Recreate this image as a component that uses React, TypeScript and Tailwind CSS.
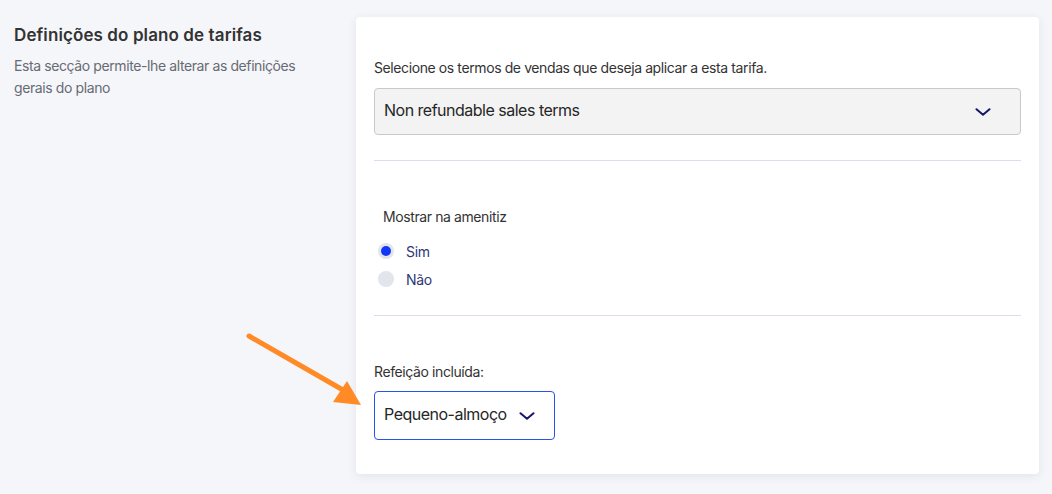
import React from 'react'

const font = { fontFamily: 'Inter, "Noto Sans", sans-serif' }

function Chevron({ className = '' }: { className?: string }) {
  return (
    <svg viewBox="0 0 16 8" className={className} fill="none">
      <path d="M1.5 1.2 L8 6.8 L14.5 1.2" stroke="#17176b" strokeWidth="2" strokeLinecap="round" strokeLinejoin="round" />
    </svg>
  )
}

function Radio({ label, checked }: { label: string; checked?: boolean }) {
  return (
    <label className="flex items-center h-5 gap-[12px]">
      <span className="w-4 h-4 rounded-full bg-[#e2e5eb] flex items-center justify-center">
        {checked && <span className="w-[10px] h-[10px] rounded-full bg-[#1237f5]" />}
      </span>
      <span className="text-[14px] tracking-[-0.3px] text-[#2d3877]">{label}</span>
    </label>
  )
}

export default function App() {
  return (
    <div className="relative w-[1052px] h-[494px] bg-[#f5f6fa] flex" style={font}>
      {/* Left intro column */}
      <div className="w-[356px] pl-[14px] pt-[23px]">
        <h2 className="text-[17px] leading-6 font-semibold tracking-[0.1px] text-[#333333]">
          Definições do plano de tarifas
        </h2>
        <p className="mt-2 w-[300px] text-[14px] leading-[22px] tracking-[-0.4px] text-[#676b73]">
          Esta secção permite-lhe alterar as definições gerais do plano
        </p>
      </div>

      {/* Card */}
      <div className="mt-[17px] w-[683px] h-[457px] bg-white rounded-[4px] shadow-[0_2px_10px_rgba(40,45,80,0.09)] px-[18px] pt-[41px]">
        <p className="text-[14px] leading-5 tracking-[-0.4px] text-[#333333]">
          Selecione os termos de vendas que deseja aplicar a esta tarifa.
        </p>
        <div className="mt-[10px] h-[47px] bg-[#f3f3f3] border border-[#c9c9c9] rounded-[4px] flex items-center justify-between pl-[9px] pr-[29px]">
          <span className="text-[16px] leading-5 pb-[3px] tracking-[-0.5px] text-[#262626]">Non refundable sales terms</span>
          <Chevron className="w-4 h-2" />
        </div>

        <div className="mt-[25px] h-px bg-[#dcdcee]" />

        <div className="pl-[4px]">
          <p className="mt-[46px] pl-[5px] text-[14px] leading-5 tracking-[-0.4px] text-[#333333]">Mostrar na amenitiz</p>
          <div className="mt-[14px] flex flex-col gap-2">
            <Radio label="Sim" checked />
            <Radio label="Não" />
          </div>
        </div>

        <div className="mt-[26px] h-px bg-[#dcdcee]" />

        <p className="mt-[46px] text-[14px] leading-5 tracking-[-0.4px] text-[#333333]">Refeição incluída:</p>
        <div className="mt-[9px] w-[181px] h-[49px] bg-white border border-[#2b52e6] rounded-[4px] flex items-center pl-[9px] pr-[19px] justify-between">
          <span className="text-[16px] leading-5 pb-[3px] tracking-[-0.5px] text-[#262626]">Pequeno-almoço</span>
          <Chevron className="w-4 h-2" />
        </div>
      </div>

      {/* Annotation arrow */}
      <svg className="absolute left-0 top-0 pointer-events-none" width="1052" height="494" viewBox="0 0 1052 494">
        <line x1="249" y1="336" x2="343" y2="390" stroke="#ff8a26" strokeWidth="5" strokeLinecap="round" />
        <polygon points="361,405 333,402 347,381" fill="#ff8a26" />
      </svg>
    </div>
  )
}
